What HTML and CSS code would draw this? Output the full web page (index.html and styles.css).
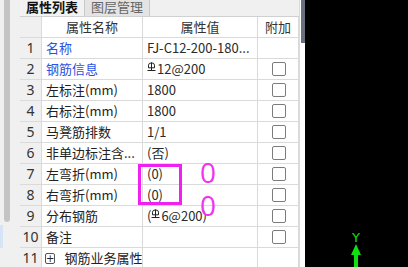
FILE: index.html
```html
<!DOCTYPE html>
<html>
<head>
<meta charset="utf-8">
<link rel="stylesheet" href="styles.css">
</head>
<body>
<div class="app">
  <div class="leftpane">
    <div class="lthumb"></div>
    <div class="lsel"></div>
  </div>
  <div class="panel">
    <div class="main">
      <div class="tabs">
        <div class="tab active">属性列表</div>
        <div class="tab">图层管理</div>
      </div>
      <div class="grid">
        <div class="c h rn"></div><div class="c h">属性名称</div><div class="c h">属性值</div><div class="c h">附加</div>

        <div class="c rn">1</div><div class="c nm blue">名称</div><div class="c val">FJ-C12-200-180...</div><div class="c ad"></div>
        <div class="c rn">2</div><div class="c nm blue">钢筋信息</div><div class="c val"><svg class="rb" width="9" height="11" viewBox="0 0 9 11"><path d="M4.5 0.5V8.5M1.5 3.2a3 2.3 0 0 1 6 0M0.5 8.5H8.5M1.5 3.2V5.8H7.5V3.2" fill="none" stroke="#222" stroke-width="1"/></svg>12@200</div><div class="c ad"><span class="cb"></span></div>
        <div class="c rn">3</div><div class="c nm">左标注(mm)</div><div class="c val">1800</div><div class="c ad"><span class="cb"></span></div>
        <div class="c rn">4</div><div class="c nm">右标注(mm)</div><div class="c val">1800</div><div class="c ad"><span class="cb"></span></div>
        <div class="c rn">5</div><div class="c nm">马凳筋排数</div><div class="c val">1/1</div><div class="c ad"><span class="cb"></span></div>
        <div class="c rn">6</div><div class="c nm">非单边标注含...</div><div class="c val">(否)</div><div class="c ad"><span class="cb"></span></div>
        <div class="c rn">7</div><div class="c nm">左弯折(mm)</div><div class="c val">(0)</div><div class="c ad"><span class="cb"></span></div>
        <div class="c rn">8</div><div class="c nm">右弯折(mm)</div><div class="c val">(0)</div><div class="c ad"><span class="cb"></span></div>
        <div class="c rn">9</div><div class="c nm">分布钢筋</div><div class="c val">(<svg class="rb" width="9" height="11" viewBox="0 0 9 11"><path d="M4.5 0.5V8.5M1.5 3.2a3 2.3 0 0 1 6 0M0.5 8.5H8.5M1.5 3.2V5.8H7.5V3.2" fill="none" stroke="#222" stroke-width="1"/></svg>6@200)</div><div class="c ad"><span class="cb"></span></div>
        <div class="c rn">10</div><div class="c nm">备注</div><div class="c val"></div><div class="c ad"><span class="cb"></span></div>
        <div class="c rn">11</div><div class="c nm"><span class="plus">+</span>钢筋业务属性</div><div class="c val"></div><div class="c ad"></div>
      </div>
    </div>
    <div class="vscroll"><div class="vthumb"></div></div>
    <div class="mark"></div>
    <div class="zero z1">0</div>
    <div class="zero z2">0</div>
  </div>
  <div class="viewport">
    <div class="axis">
      <span class="ylabel">Y</span>
      <svg width="12" height="24" viewBox="0 0 12 24"><path d="M6 0L11 11H8V24H4V11H1Z" fill="#10e010"/></svg>
    </div>
  </div>
</div>
</body>
</html>
```
FILE: styles.css
```css
html, body { margin: 0; padding: 0; }
body {
  width: 408px; height: 267px; overflow: hidden;
  font-family: "Noto Sans CJK SC", "Noto Sans", sans-serif;
  font-size: 13px; color: #222; background: #fff;
}
.app { display: flex; width: 408px; height: 267px; }
.leftpane { width: 20px; flex: none; background: #f0f0f0; position: relative; }
.lthumb { position: absolute; left: 4px; top: 0; width: 6px; height: 222px; background: #c4c4c4; border-radius: 0 0 3px 3px; }
.lsel { position: absolute; left: 0; top: 225px; width: 3px; height: 23px; background: #d6e4f5; }
.panel { display: flex; width: 285px; flex: none; position: relative; }
.main { width: 279px; flex: none; display: flex; flex-direction: column; }
.tabs { height: 16px; display: flex; align-items: flex-start; background: #f0f0f0; border-bottom: 1px solid #d0d0d0; }
.tab { height: 16px; line-height: 14px; padding: 0 6px; color: #666; background: #e4e4e4; border-right: 1px solid #c8c8c8; white-space: nowrap; font-size: 13px; box-sizing: border-box; }
.tab.active { color: #111; font-weight: bold; background: #f2f2f2; }
.grid { display: grid; grid-template-columns: 22px 101px 115px 41px; grid-auto-rows: 21px; }
.c { border-right: 1px solid #dadada; border-bottom: 1px solid #dadada; box-sizing: border-box; line-height: 20px; white-space: nowrap; overflow: hidden; display: flex; align-items: center; }
.h { justify-content: center; color: #333; }
.rn { background: #f0f0f0; justify-content: center; color: #333; font-family: "Noto Sans", sans-serif; font-size: 14px; }
.nm { padding-left: 4px; }
.blue { color: #2b52e0; }
.val { padding-left: 4px; color: #2a2a2a; }
.ad { justify-content: center; border-right: 1px solid #dadada; }
.cb { width: 12px; height: 12px; border: 1px solid #7c7c7c; border-radius: 2px; background: #fff; margin-left: 1px; }
.rb { margin-right: 1px; position: relative; top: -2px; }
.plus { display: inline-flex; align-items: center; justify-content: center; width: 9px; height: 9px; border: 1px solid #555; border-radius: 2px; font-size: 10px; line-height: 9px; margin-right: 9px; margin-left: -1px; font-family: "DejaVu Sans", sans-serif; }
.vscroll { width: 6px; flex: none; background: #fff; border-left: 1px solid #dadada; box-sizing: border-box; display: flex; justify-content: flex-end; }
.vthumb { width: 4px; height: 43px; background: #687080; }
.mark { position: absolute; left: 118px; top: 164px; width: 44px; height: 41px; border: 3px solid #f020f0; box-sizing: border-box; }
.zero { position: absolute; left: 180px; color: #f033f0; font-family: "Open Sans", sans-serif; font-weight: 400; font-size: 28px; line-height: 28px; }
.z1 { top: 158px; }
.z2 { top: 191px; }
.viewport { flex: 1; background: #000; position: relative; }
.axis { position: absolute; left: 45px; top: 231px; display: flex; flex-direction: column; align-items: center; width: 12px; }
.ylabel { color: #10e010; font-family: "DejaVu Sans", sans-serif; font-size: 13px; line-height: 13px; height: 13px; }
```
